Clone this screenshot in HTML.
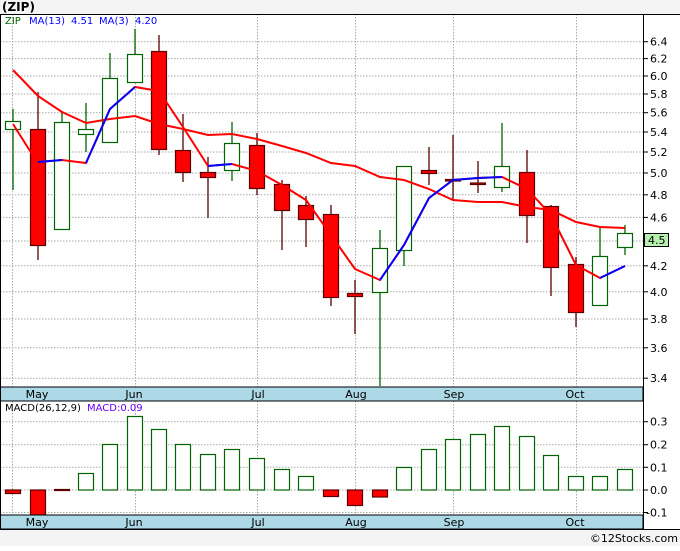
<!DOCTYPE html>
<html><head><meta charset="utf-8"><style>
body{margin:0;background:#fff;width:680px;height:546px;overflow:hidden;font-family:"Liberation Sans","DejaVu Sans",sans-serif}
svg text{font-family:"DejaVu Sans","Liberation Sans",sans-serif}
</style></head><body>
<svg width="680" height="546" xmlns="http://www.w3.org/2000/svg">
<rect x="0" y="0" width="680" height="546" fill="#f4f4f4"/>
<rect x="0" y="14" width="680" height="516" fill="#fff"/>
<text x="2" y="11" font-size="12" font-weight="bold" fill="#000">(ZIP)</text>
<g stroke="#aaa" stroke-dasharray="1.5,1.5" stroke-width="1">
<line x1="0" x2="643" y1="41.7" y2="41.7"/><line x1="0" x2="643" y1="58.6" y2="58.6"/><line x1="0" x2="643" y1="76" y2="76"/><line x1="0" x2="643" y1="94" y2="94"/><line x1="0" x2="643" y1="112.7" y2="112.7"/><line x1="0" x2="643" y1="132" y2="132"/><line x1="0" x2="643" y1="152" y2="152"/><line x1="0" x2="643" y1="173" y2="173"/><line x1="0" x2="643" y1="194.8" y2="194.8"/><line x1="0" x2="643" y1="217.4" y2="217.4"/><line x1="0" x2="643" y1="241" y2="241"/><line x1="0" x2="643" y1="265.8" y2="265.8"/><line x1="0" x2="643" y1="291.8" y2="291.8"/><line x1="0" x2="643" y1="319" y2="319"/><line x1="0" x2="643" y1="347.8" y2="347.8"/><line x1="0" x2="643" y1="378.2" y2="378.2"/>
<line x1="12.5" x2="12.5" y1="14" y2="387"/><line x1="135.5" x2="135.5" y1="14" y2="387"/><line x1="257.5" x2="257.5" y1="14" y2="387"/><line x1="355.5" x2="355.5" y1="14" y2="387"/><line x1="453.5" x2="453.5" y1="14" y2="387"/><line x1="576.5" x2="576.5" y1="14" y2="387"/>
<line x1="0" x2="643" y1="421.7" y2="421.7"/><line x1="0" x2="643" y1="444.7" y2="444.7"/><line x1="0" x2="643" y1="467.3" y2="467.3"/><line x1="0" x2="643" y1="490" y2="490"/><line x1="0" x2="643" y1="512.5" y2="512.5"/>
<line x1="12.5" x2="12.5" y1="401" y2="515"/><line x1="135.5" x2="135.5" y1="401" y2="515"/><line x1="257.5" x2="257.5" y1="401" y2="515"/><line x1="355.5" x2="355.5" y1="401" y2="515"/><line x1="453.5" x2="453.5" y1="401" y2="515"/><line x1="576.5" x2="576.5" y1="401" y2="515"/>
</g>
<!-- wicks -->
<g stroke-width="1.3">
<g stroke="#006400">
<line x1="13" x2="13" y1="109" y2="190"/><line x1="62" x2="62" y1="111" y2="229"/><line x1="86" x2="86" y1="103" y2="152"/><line x1="110" x2="110" y1="53" y2="143"/><line x1="135" x2="135" y1="29" y2="82"/><line x1="232" x2="232" y1="122" y2="181"/><line x1="380" x2="380" y1="230" y2="386"/><line x1="404" x2="404" y1="166" y2="266"/><line x1="502" x2="502" y1="123" y2="192"/><line x1="600" x2="600" y1="228" y2="305"/><line x1="625" x2="625" y1="225" y2="255"/>
</g>
<g stroke="#5a0000">
<line x1="38" x2="38" y1="92" y2="260"/><line x1="159" x2="159" y1="35" y2="155"/><line x1="183" x2="183" y1="114" y2="182"/><line x1="208" x2="208" y1="157" y2="218"/><line x1="257" x2="257" y1="133" y2="195"/><line x1="282" x2="282" y1="180" y2="250"/><line x1="306" x2="306" y1="196" y2="247"/><line x1="331" x2="331" y1="205" y2="306"/><line x1="355" x2="355" y1="280" y2="334"/><line x1="429" x2="429" y1="147" y2="185"/><line x1="453" x2="453" y1="135" y2="200"/><line x1="478" x2="478" y1="161" y2="193"/><line x1="527" x2="527" y1="150" y2="243"/><line x1="551" x2="551" y1="205" y2="296"/><line x1="576" x2="576" y1="257" y2="327"/>
</g></g>
<!-- bodies -->
<g fill="#fff" stroke="#006400" stroke-width="1.2">
<rect x="5.5" y="121.5" width="15" height="8"/><rect x="54.5" y="122.5" width="15" height="107"/><rect x="78.5" y="129.5" width="15" height="5"/><rect x="102.5" y="78.5" width="15" height="64"/><rect x="127.5" y="54.5" width="15" height="28"/><rect x="224.5" y="143.5" width="15" height="27"/><rect x="372.5" y="248.5" width="15" height="44"/><rect x="396.5" y="166.5" width="15" height="84"/><rect x="494.5" y="166.5" width="15" height="21"/><rect x="592.5" y="256.5" width="15" height="49"/><rect x="617.5" y="233.5" width="15" height="14"/>
</g>
<g fill="#ff0000" stroke="#5a0000" stroke-width="1.2">
<rect x="30.5" y="129.5" width="15" height="116"/><rect x="151.5" y="51.5" width="15" height="98"/><rect x="175.5" y="150.5" width="15" height="22"/><rect x="200.5" y="172.5" width="15" height="5"/><rect x="249.5" y="145.5" width="15" height="43"/><rect x="274.5" y="184.5" width="15" height="26"/><rect x="298.5" y="205.5" width="15" height="14"/><rect x="323.5" y="214.5" width="15" height="83"/><rect x="347.5" y="293.5" width="15" height="3"/><rect x="421.5" y="170.5" width="15" height="3"/><rect x="445.5" y="179.5" width="15" height="1.5"/><rect x="470.5" y="183" width="15" height="1.5"/><rect x="519.5" y="172.5" width="15" height="43"/><rect x="543.5" y="206.5" width="15" height="61"/><rect x="568.5" y="264.5" width="15" height="48"/>
</g>
<!-- MA lines -->
<polyline fill="none" stroke="#ff0000" stroke-width="2" points="13,70 38,96 62,112 86,123 110,119 135,116 159,124 183,129 208,135 232,134 257,139 282,146 306,153 331,163 355,166 380,177 404,180 429,189 453,200 478,202 502,202 527,207 551,210 576,222 600,227 625,228"/>
<polyline fill="none" stroke="#ff0000" stroke-width="2" points="13,124 30,151 38,162 62,160 86,163 110,109 135,87 159,91 183,127 208,166 232,164 257,171 282,185 306,200 331,235 355,269 380,280 404,245 429,198 453,180 478,178 502,177 527,189 551,215 576,265 600,278 625,266"/>
<g fill="none" stroke="#0000ff" stroke-width="2">
<polyline points="38,162 62,160"/><polyline points="86,163 110,109 135,87"/><polyline points="208,166 232,164"/><polyline points="380,280 404,245 429,198 453,180 478,178 502,177"/><polyline points="600,278 625,266"/>
</g>
<text x="5" y="24" font-size="10" fill="#006400">ZIP</text>
<text x="29" y="24" font-size="10" fill="#0000ff">MA(13)</text>
<text x="71" y="24" font-size="10" fill="#0000ff">4.51</text>
<text x="99" y="24" font-size="10" fill="#0000ff">MA(3)</text>
<text x="135" y="24" font-size="10" fill="#0000ff">4.20</text>
<!-- MACD bars -->
<g fill="#fff" stroke="#006400" stroke-width="1.2">
<rect x="78.5" y="473.5" width="15" height="16.5"/><rect x="102.5" y="444.5" width="15" height="45.5"/><rect x="127.5" y="416.5" width="15" height="73.5"/><rect x="151.5" y="429.5" width="15" height="60.5"/><rect x="175.5" y="444.5" width="15" height="45.5"/><rect x="200.5" y="454.5" width="15" height="35.5"/><rect x="224.5" y="449.5" width="15" height="40.5"/><rect x="249.5" y="458.5" width="15" height="31.5"/><rect x="274.5" y="469.5" width="15" height="20.5"/><rect x="298.5" y="476.5" width="15" height="13.5"/><rect x="396.5" y="467.5" width="15" height="22.5"/><rect x="421.5" y="449.5" width="15" height="40.5"/><rect x="445.5" y="439.5" width="15" height="50.5"/><rect x="470.5" y="434.5" width="15" height="55.5"/><rect x="494.5" y="426.5" width="15" height="63.5"/><rect x="519.5" y="436.5" width="15" height="53.5"/><rect x="543.5" y="455.5" width="15" height="34.5"/><rect x="568.5" y="476.5" width="15" height="13.5"/><rect x="592.5" y="476.5" width="15" height="13.5"/><rect x="617.5" y="469.5" width="15" height="20.5"/>
</g>
<g fill="#ff0000" stroke="#5a0000" stroke-width="1.2">
<rect x="5.5" y="490" width="15" height="3.5"/><rect x="30.5" y="490" width="15" height="25"/><rect x="54.5" y="489.5" width="15" height="1"/><rect x="323.5" y="490" width="15" height="6.5"/><rect x="347.5" y="490" width="15" height="15.5"/><rect x="372.5" y="490" width="15" height="7"/>
</g>
<text x="5" y="411" font-size="10" fill="#000">MACD(26,12,9)</text>
<text x="87" y="411" font-size="10" fill="#6600ff">MACD:0.09</text>
<!-- date bands -->
<rect x="0" y="387" width="643" height="14" fill="#add8e6" stroke="#000"/>
<rect x="0" y="515" width="643" height="14" fill="#add8e6" stroke="#000"/>
<g font-size="11" fill="#000" text-anchor="middle">
<text x="37" y="398">May</text><text x="134" y="398">Jun</text><text x="258" y="398">Jul</text><text x="356" y="398">Aug</text><text x="454" y="398">Sep</text><text x="575" y="398">Oct</text>
<text x="37" y="526">May</text><text x="134" y="526">Jun</text><text x="258" y="526">Jul</text><text x="356" y="526">Aug</text><text x="454" y="526">Sep</text><text x="575" y="526">Oct</text>
</g>
<!-- frame -->
<line x1="0" x2="680" y1="14.5" y2="14.5" stroke="#000"/>
<line x1="0.5" x2="0.5" y1="14" y2="530" stroke="#000"/>
<line x1="643.5" x2="643.5" y1="14" y2="530" stroke="#000"/>
<line x1="0" x2="680" y1="529.5" y2="529.5" stroke="#000"/>
<!-- axis labels -->
<g font-size="11" fill="#000">
<text x="650" y="45.7">6.4</text><text x="650" y="62.6">6.2</text><text x="650" y="80">6.0</text><text x="650" y="98">5.8</text><text x="650" y="116.7">5.6</text><text x="650" y="136">5.4</text><text x="650" y="156">5.2</text><text x="650" y="177">5.0</text><text x="650" y="198.8">4.8</text><text x="650" y="221.4">4.6</text><text x="650" y="269.8">4.2</text><text x="650" y="295.8">4.0</text><text x="650" y="323">3.8</text><text x="650" y="351.8">3.6</text><text x="650" y="382.2">3.4</text>
<text x="650" y="425.7">0.3</text><text x="650" y="448.7">0.2</text><text x="650" y="471.3">0.1</text><text x="650" y="494">0.0</text><text x="646" y="516.5">-0.1</text>
</g>
<g stroke="#000">
<line x1="643" x2="648" y1="41.7" y2="41.7"/><line x1="643" x2="648" y1="58.6" y2="58.6"/><line x1="643" x2="648" y1="76" y2="76"/><line x1="643" x2="648" y1="94" y2="94"/><line x1="643" x2="648" y1="112.7" y2="112.7"/><line x1="643" x2="648" y1="132" y2="132"/><line x1="643" x2="648" y1="152" y2="152"/><line x1="643" x2="648" y1="173" y2="173"/><line x1="643" x2="648" y1="194.8" y2="194.8"/><line x1="643" x2="648" y1="217.4" y2="217.4"/><line x1="643" x2="648" y1="265.8" y2="265.8"/><line x1="643" x2="648" y1="291.8" y2="291.8"/><line x1="643" x2="648" y1="319" y2="319"/><line x1="643" x2="648" y1="347.8" y2="347.8"/><line x1="643" x2="648" y1="378.2" y2="378.2"/>
<line x1="643" x2="648" y1="421.7" y2="421.7"/><line x1="643" x2="648" y1="444.7" y2="444.7"/><line x1="643" x2="648" y1="467.3" y2="467.3"/><line x1="643" x2="648" y1="490" y2="490"/><line x1="643" x2="648" y1="512.5" y2="512.5"/>
</g>
<rect x="644.5" y="233.5" width="24" height="13" fill="#b8f0b0" stroke="#000"/>
<text x="648" y="244" font-size="11" fill="#000">4.5</text>
<text x="678" y="542" font-size="11" fill="#000" text-anchor="end">©12Stocks.com</text>
</svg>
</body></html>
